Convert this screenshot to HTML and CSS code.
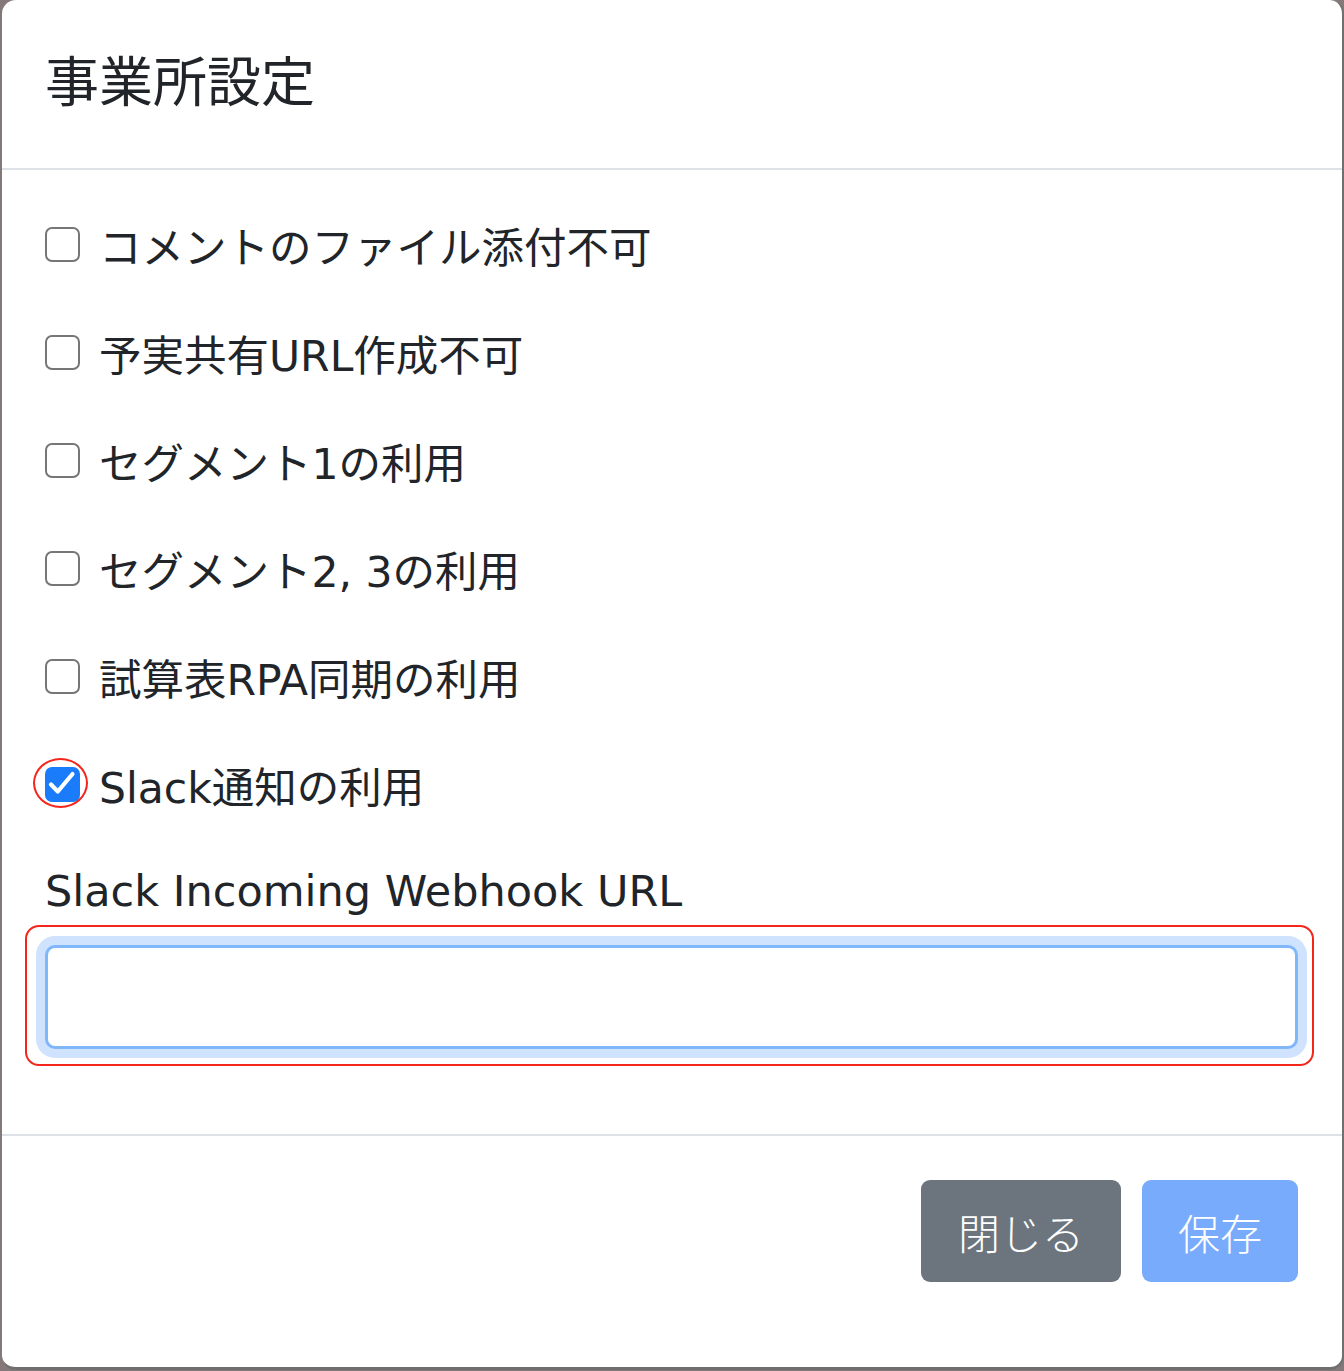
FILE: index.html
```html
<!DOCTYPE html>
<html lang="ja">
<head>
<meta charset="UTF-8">
<meta name="viewport" content="width=device-width, initial-scale=1.0">
<title>事業所設定</title>
<link rel="stylesheet" href="styles.css">
</head>
<body>
    <div class="modal">
        <div class="modal-header">
            <h5 class="modal-title">事業所設定</h5>
        </div>
        <div class="modal-body">
            <label class="check-row"><span class="box"></span>コメントのファイル添付不可</label>
            <label class="check-row"><span class="box"></span>予実共有URL作成不可</label>
            <label class="check-row"><span class="box"></span>セグメント1の利用</label>
            <label class="check-row"><span class="box"></span>セグメント2, 3の利用</label>
            <label class="check-row"><span class="box"></span>試算表RPA同期の利用</label>
            <label class="check-row">
                <span class="box checked">
                    <svg width="34" height="34" viewBox="0 0 34 34">
                        <path d="M6 17.5 L12.8 24.5 L27.5 7" fill="none" stroke="#fff" stroke-width="4.2" stroke-linecap="round" stroke-linejoin="round"/>
                    </svg>
                    <span class="mark-circle"></span>
                </span>Slack通知の利用
            </label>

            <div class="field-label">Slack Incoming Webhook URL</div>
            <div class="mark-box">
                <input type="text" class="url-input">
            </div>
        </div>
        <div class="modal-footer">
            <button class="btn btn-gray">閉じる</button>
            <button class="btn btn-blue">保存</button>
        </div>
    </div>
</body>
</html>
```

FILE: styles.css
```css
html, body{
    margin:0;
    padding:0;
    background:#857878;
}
body{
    width:1344px;
    height:1371px;
    overflow:hidden;
    font-family:"DejaVu Sans", "Noto Sans CJK JP", sans-serif;
    color:#212529;
}
.modal{
    box-sizing:border-box;
    width:1342px;
    height:1370px;
    margin-left:2px;
    background:#fff;
    border-radius:14px;
    border-right:2px solid #6f6f6f;
    border-bottom:3px solid #6f6f6f;
    display:flex;
    flex-direction:column;
}
.modal-header{
    height:168px;
    border-bottom:2px solid #dee2e6;
    display:flex;
    align-items:center;
    padding-left:43px;
}
.modal-title{
    margin:0;
    font-size:54px;
    font-weight:400;
    line-height:1.2;
}
.modal-body{
    padding:20px 0 0 43px;
    height:966px;
    box-sizing:border-box;
    border-bottom:2px solid #dee2e6;
}
.check-row{
    display:flex;
    align-items:center;
    height:108px;
    font-size:42.5px;
}
.box{
    position:relative;
    box-sizing:border-box;
    width:35px;
    height:35px;
    border:2.5px solid #767676;
    border-radius:7px;
    margin-right:19px;
    flex:none;
}
.box.checked{
    border:none;
    background:#1a7cfa;
}
.box svg{
    display:block;
}
/* 赤丸の注釈 */
.mark-circle{
    position:absolute;
    left:-12px;
    top:-9px;
    width:55px;
    height:50px;
    box-sizing:border-box;
    border:2.5px solid #f4251a;
    border-radius:50%;
}
.field-label{
    margin-top:24px;
    line-height:58px;
    font-size:43px;
}
.mark-box{
    box-sizing:border-box;
    width:1289px;
    margin:5px 0 0 -20px;
    padding:18px 14px 15px 18px;
    border:2.5px solid #f4251a;
    border-radius:14px;
}
.url-input{
    display:block;
    box-sizing:border-box;
    width:100%;
    height:104px;
    border:3px solid #80b7fb;
    border-radius:10px;
    box-shadow:0 0 0 9px #cfe2fe;
    outline:none;
    background:#fff;
}
.modal-footer{
    display:flex;
    justify-content:flex-end;
    gap:21px;
    padding:44px 44px 0 0;
}
.btn{
    height:102px;
    border:none;
    border-radius:9px;
    font-family:inherit;
    font-size:42px;
    font-weight:300;
    color:#fff;
    padding:0;
}
.btn-gray{
    width:200px;
    background:#6c757d;
}
.btn-blue{
    width:156px;
    background:#78abfc;
}
```
